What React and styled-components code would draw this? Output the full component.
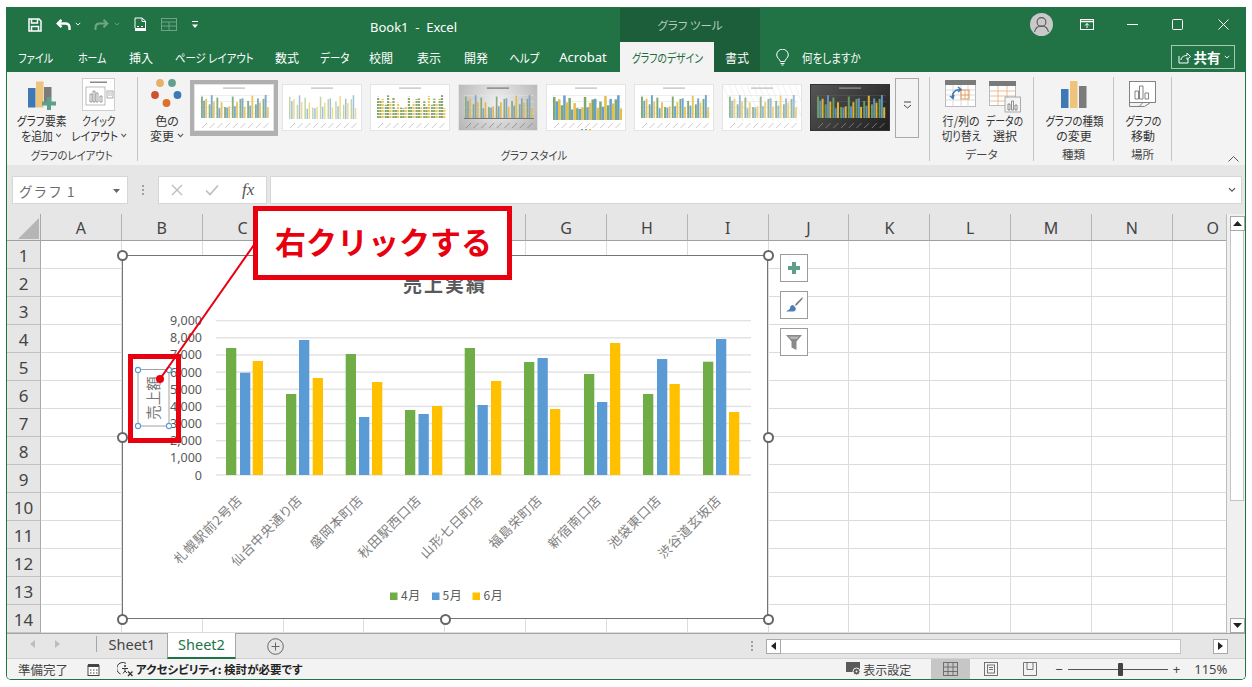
import React from "react";
import styled, { createGlobalStyle } from "styled-components";

const JP = `"Noto Sans CJK JP", "Noto Sans", sans-serif`;
const GREEN = "#217346";
const DARK = "#1c5e3a";

const Global = createGlobalStyle`
  html, body { margin: 0; padding: 0; background: #fff; overflow: hidden; }
  * { box-sizing: border-box; }
`;

const Win = styled.div`
  margin: 7px 0 0 6px; width: 1240px; height: 673px; display: flex; flex-direction: column;
  border: 1px solid ${GREEN}; border-top: 0; border-radius: 0 0 5px 5px; overflow: hidden;
  font-family: ${JP}; font-feature-settings: "palt"; color: #333; background: #fff;
`;
const TitleBar = styled.div`
  height: 35px; background: ${GREEN}; display: flex; align-items: center; color: #fff; flex: none;
`;
const Qat = styled.span`
  display: inline-flex; flex: none; margin-left: ${p => p.$ml}px; opacity: ${p => p.$dim ? 0.35 : 1};
`;
const DocTitle = styled.div`
  position: absolute; left: 370px; top: 18px; font: 13px "Noto Sans", sans-serif; color: #fff; white-space: pre;
`;
const Context = styled.div`
  margin-left: auto; width: 140px; height: 34px; align-self: flex-end; background: ${DARK}; color: #b4cdbf;
  display: flex; align-items: center; justify-content: center; font-size: 11.5px; padding-bottom: 1px;
`;
const TitleRight = styled.div`
  width: 485px; display: flex; align-items: center; flex: none; height: 100%;
`;
const WinIcon = styled.span`
  display: inline-flex; flex: none; margin-left: ${p => p.$ml}px;
`;
const TabBar = styled.div`
  height: 30px; background: ${GREEN}; display: flex; flex: none; align-items: stretch;
`;
const Tab = styled.div`
  width: ${p => p.$w}px; flex: none; display: flex; align-items: center; justify-content: center;
  font-size: 12px; color: ${p => p.$active ? "#1f6b41" : "#fff"};
  background: ${p => p.$active ? "#f3f3f3" : p.$ctx ? DARK : "transparent"};
  margin-left: ${p => p.$ml || 0}px; white-space: nowrap;
`;
const LatinTab = styled(Tab)`
  font-family: "Noto Sans", sans-serif; font-size: 13px;
`;
const Squeeze = styled.span`
  display: inline-flex; align-items: center; gap: 3px; white-space: nowrap; transform: scaleX(${p => p.$x || 1});
  transform-origin: ${p => p.$left ? "left center" : "center"};
`;
const TellMe = styled.div`
  margin-left: 16px; display: flex; align-items: center; gap: 13px; color: #fff; font-size: 12px; flex: none; width: 100px;
`;
const ShareBtn = styled.div`
  margin: 3px 10px 3px auto; width: 64px; border: 1px solid #a6c9b5; color: #fff; display: flex; align-items: center;
  justify-content: center; gap: 3px; font-size: 13.5px; font-weight: 700;
`;
const Ribbon = styled.div`
  height: 93px; background: #f3f3f3; display: flex; flex: none; position: relative;
`;
const Group = styled.div`
  width: ${p => p.$w}px; flex: none; display: flex; flex-direction: column; position: relative;
  &::after { content: ""; position: absolute; right: 0; top: 5px; bottom: 4px; width: 1px; background: #c6c6c6; }
`;
const GroupBody = styled.div`
  flex: 1; display: flex; align-items: flex-start; padding: 6px 0 0 ${p => p.$pl || 0}px; justify-content: ${p => p.$center ? "center" : "flex-start"};
`;
const GroupLabel = styled.div`
  height: 20px; font-size: 11.5px; line-height: 19px; display: flex; justify-content: center; color: #444; padding-right: 1px;
`;
const RibbonBtn = styled.div`
  width: ${p => p.$w}px; flex: none; display: flex; flex-direction: column; align-items: center;
  font-size: 12px; line-height: 15px; color: #333;
`;
const IconBox = styled.div`
  height: 35px; display: flex; align-items: flex-start; justify-content: center; padding-top: ${p => p.$pt || 0}px;
`;
const Gallery = styled.div`
  display: flex; margin-top: 2px; flex: none;
`;
const Thumb = styled.div`
  width: 88px; height: 56px; padding: 4px 4px 5px; flex: none; background: ${p => p.$sel ? "#b0b0b0" : "transparent"};
`;
const ThumbInner = styled.div`
  width: 80px; height: 47px; background: ${p => p.$bg}; border: 1px solid ${p => p.$dark ? "#333" : "#e4e4e4"};
  svg { display: block; }
`;
const MoreBtn = styled.div`
  width: 24px; height: 60px; margin: 0 0 0 1px; border: 1px solid #a9a9a9; display: flex; align-items: center; justify-content: center; flex: none; padding-bottom: 6px;
`;
const Collapse = styled.span`
  position: absolute; right: 6px; bottom: 3px; display: inline-flex;
`;
const FormulaZone = styled.div`
  height: 49px; background: #e6e6e6; padding: 11px 3px 10px 5px; display: flex; flex: none; align-items: stretch;
`;
const NameBox = styled.div`
  width: 116px; background: #fff; border: 1px solid #d6d6d6; display: flex; align-items: center; justify-content: space-between;
  padding: 1px 7px 0 6px; font-size: 13.5px; color: #6d6d6d; font-feature-settings: normal; letter-spacing: 1.1px;
`;
const Dots = styled.div`
  width: 30px; display: flex; flex-direction: column; gap: 2px; align-items: center; justify-content: center; flex: none;
`;
const Dot = styled.i`
  width: 2px; height: 2px; background: #a0a0a0; display: block;
`;
const FxBox = styled.div`
  width: 109px; background: #fff; border: 1px solid #d6d6d6; display: flex; align-items: center; padding-left: 12px; flex: none; margin-right: 3px;
  gap: 22px;
`;
const Fx = styled.span`
  font: italic 17px "Liberation Serif", serif; color: #555; margin-left: 1px;
`;
const FormulaInput = styled.div`
  flex: 1; background: #fff; border: 1px solid #d6d6d6; display: flex; align-items: center; justify-content: flex-end; padding-right: 5px;
`;
const Sheet = styled.div`
  height: 419px; position: relative; display: flex; flex: none; background: #e6e6e6;
`;
const GridArea = styled.div`
  width: 1220px; height: 419px; overflow: hidden; display: grid; flex: none;
  grid-template-columns: 34px repeat(15, 80.85px); grid-template-rows: 27px repeat(14, 28px);
  border-right: 1px solid #bdbdbd; background: #fff;
`;
const Corner = styled.div`
  background: #e6e6e6; border-right: 1px solid #a8a8a8; border-bottom: 1px solid #a0a0a0; position: relative;
  &::after { content: ""; position: absolute; right: 1px; bottom: 1px; width: 0; height: 0;
    border-left: 21px solid transparent; border-bottom: 21px solid #b5b5b5; }
`;
const ColHead = styled.div`
  background: #e6e6e6; border-right: 1px solid #b4b4b4; border-bottom: 1px solid #a0a0a0; display: flex; align-items: center; justify-content: center;
  font: 16px "Noto Sans", sans-serif; color: #444; padding-top: 1px;
`;
const RowHead = styled.div`
  background: #e6e6e6; border-right: 1px solid #a8a8a8; border-bottom: 1px solid #c2c2c2; display: flex; align-items: center; justify-content: center;
  font: 17px "Noto Sans", sans-serif; color: #444; padding-top: 1px;
`;
const Cell = styled.div`
  border-right: 1px solid #dcdcdc; border-bottom: 1px solid #dcdcdc; background: #fff;
`;
const VScroll = styled.div`
  width: 18px; flex: none; background: #f0f0f0; padding: 2px 1px 0 3px; display: flex; flex-direction: column;
`;
const ScrollBtn = styled.div`
  width: 15px; height: 15px; flex: none; background: #fff; border: 1px solid #a9a9a9; display: flex; align-items: center; justify-content: center;
  margin-top: ${p => p.$mt || 0}px;
`;
const VThumb = styled.div`
  height: 270px; flex: none; background: #fff; border: 1px solid #c4c4c4; border-top: 0;
`;
const ChartFrame = styled.div`
  position: absolute; left: 115px; top: 41px; width: 646px; height: 364px; background: #fff; border: 1px solid #747474;
  svg { position: absolute; left: -1px; top: -1px; display: block; }
`;
const Handle = styled.span`
  position: absolute; left: ${p => p.$x}px; top: ${p => p.$y}px; width: 11px; height: 11px; margin: -5.5px 0 0 -5.5px;
  border: 2px solid #666; border-radius: 50%; background: #fff;
`;
const SideTools = styled.div`
  position: absolute; left: 773px; top: 40px; display: flex; flex-direction: column; gap: 9px;
`;
const SideBtn = styled.div`
  width: 28px; height: 28px; background: #fff; border: 1px solid #9c9c9c; display: flex; align-items: center; justify-content: center;
`;
const RedBox = styled.div`
  position: absolute; left: 121px; top: 140px; width: 53px; height: 89px; border: 5px solid #e8000e;
`;
const Overlay = styled.svg`
  position: absolute; left: 0; top: 0; width: 1220px; height: 419px; pointer-events: none; overflow: visible;
`;
const Callout = styled.div`
  position: absolute; left: 246px; top: -8px; width: 259px; height: 74px; background: #fff; border: 5px solid #e8000e;
  display: flex; align-items: center; justify-content: center; color: #e8000e; font-size: 31px; font-weight: 700;
  font-feature-settings: normal; line-height: 1; padding: 0 0 6px 2px; white-space: nowrap;
`;
const SheetBar = styled.div`
  height: 26px; flex: none; background: #e6e6e6; border-top: 1px solid #a6a6a6; border-bottom: 1px solid #d2d2d2; display: flex; align-items: stretch;
`;
const NavArrows = styled.div`
  width: 90px; flex: none; display: flex; align-items: center; padding-left: 23px; gap: 20px; border-right: 1px solid #a6a6a6; margin: 2px 0 6px;
`;
const SheetTab = styled.div`
  width: ${p => p.$w}px; flex: none; display: flex; align-items: center; justify-content: center; font: 14.5px "Noto Sans", sans-serif;
  margin-top: -1px; padding-bottom: 2px;
  color: ${p => p.$active ? "#217346" : "#444"};
  background: ${p => p.$active ? "#fff" : "transparent"};
  border-bottom: 2px solid ${p => p.$active ? "#217346" : "transparent"};
  border-left: ${p => p.$active ? "1px solid #a6a6a6" : "0"};
  border-right: ${p => p.$active ? "1px solid #a6a6a6" : "0"};
  margin-bottom: -1px;
`;
const AddSheet = styled.div`
  margin-left: 31px; display: flex; align-items: center; flex: none;
`;
const BarDots = styled.div`
  margin-left: 461px; width: 14px; display: flex; flex-direction: column; gap: 2px; align-items: center; justify-content: center; flex: none;
`;
const HScroll = styled.div`
  display: flex; align-items: center; flex: none; margin-left: 7px;
`;
const HThumb = styled.div`
  width: 400px; height: 15px; background: #fff; border: 1px solid #c4c4c4; border-left: 0; flex: none;
`;
const HGap = styled.div`
  width: 32px; flex: none;
`;
const StatusBar = styled.div`
  flex: 1; background: #f3f3f3; display: flex; align-items: center; font-size: 12.5px; color: #444; padding-left: 11px;
`;
const StatusText = styled.span`
  flex: none; font-size: ${p => p.$s || 12}px; font-weight: ${p => p.$b ? 700 : 400}; margin-left: ${p => p.$ml || 0}px; white-space: nowrap; color: ${p => p.$b ? "#222" : "#444"};
`;
const ViewBtn = styled.div`
  width: 39px; height: 100%; flex: none; display: flex; align-items: center; justify-content: center; background: ${p => p.$active ? "#c6c6c6" : "transparent"}; margin-left: ${p => p.$ml || 0}px;
`;
const Zoom = styled.span`
  font: 13px "Noto Sans", sans-serif; color: #444; margin-left: ${p => p.$ml}px; flex: none;
`;
const ZoomTrack = styled.div`
  width: 100px; height: 1px; background: #555; margin-left: 5px; position: relative; flex: none;
  &::after { content: ""; position: absolute; left: 50px; top: -6px; width: 5px; height: 13px; background: #444; border-radius: 1px; }
`;

/* ---- data ---- */
const TOPS = [[348,372.7,361],[394,340,378],[354,417,382],[410,414,406],[348,405,381],[362,358,409],[374,402,343],[394,359,384],[361.7,339,412]];
const XS = [[226,240,252.7],[286,299,312.7],[345.7,359,372],[405,418.5,432],[464.7,477.5,491],[524,537.5,550],[584,597,610],[643,657,669.5],[703,716,729]];
const COLORS = ["#70ad47", "#5b9bd5", "#ffc000"];
const STORES = ["札幌駅前2号店","仙台中央通り店","盛岡本町店","秋田駅西口店","山形七日町店","福島栄町店","新宿南口店","池袋東口店","渋谷道玄坂店"];
const ENDS = [243,303,364,422,484,543,602,662,722];
const COLS = "ABCDEFGHIJKLMNO".split("");
const HIDDEN_BY_CALLOUT = "DEF";

/* ---- icons ---- */
const Chev = ({ c = "#555", s = 7 }) => (
  <svg width={s} height={s * 0.7} viewBox="0 0 7 5" fill="none" stroke={c} strokeWidth="1.1"><path d="M.8 1l2.7 2.7L6.2 1" /></svg>
);
const SaveI = () => (
  <svg width="14" height="14" viewBox="0 0 14 14" fill="none" stroke="#fff" strokeWidth="1.5"><path d="M1 1h10l2 2v10H1z" /><path d="M3.5 1v4h6V1M3.5 13V8.5h7V13" /></svg>
);
const UndoI = () => (
  <svg width="15" height="12" viewBox="0 0 15 12" fill="none" stroke="#fff" strokeWidth="2.4"><path d="M1.5 4.5h8a4 4 0 0 1 4 3.5v3" /><path d="M5.5 .8L1.8 4.5l3.7 3.7" /></svg>
);
const RedoI = () => (
  <svg width="15" height="12" viewBox="0 0 15 12" fill="none" stroke="#fff" strokeWidth="2.1"><path d="M13.5 4.5h-8a4 4 0 0 0-4 3.5v3" /><path d="M9.5 .8l3.7 3.7-3.7 3.7" /></svg>
);
const DocI = () => (
  <svg width="13" height="15" viewBox="0 0 13 15" fill="none" stroke="#fff" strokeWidth="1"><path d="M1 11V1h7l3.5 3v7M8 1v3.5h3.5" /><rect x="1" y="11" width="11" height="3" fill="#fff" stroke="none" /><path d="M3 9.5h2M7 9.5h2" /></svg>
);
const FormI = () => (
  <svg width="16" height="13" viewBox="0 0 16 13" fill="none" stroke="#fff" strokeWidth="1"><rect x=".5" y=".5" width="15" height="12" /><path d="M1 4h14M1 8h14M8 4v8" /></svg>
);
const DropI = () => (
  <svg width="6" height="8" viewBox="0 0 6 8" fill="#fff"><rect y="0" width="6" height="1" /><path d="M0 3.5h6L3 7z" /></svg>
);
const Avatar = () => (
  <svg width="23" height="23" viewBox="0 0 23 23"><circle cx="11.5" cy="11.5" r="11.5" fill="#c9c9c9" /><circle cx="11.5" cy="9" r="4.4" fill="none" stroke="#5a5a5a" strokeWidth="1.1" /><path d="M4.5 19c.8-4 3.6-6 7-6s6.200 2 7 6" fill="none" stroke="#5a5a5a" strokeWidth="1.1" /></svg>
);
const RibbonDisp = () => (
  <svg width="14" height="11" viewBox="0 0 14 11" fill="none" stroke="#fff" strokeWidth="1"><rect x=".5" y=".5" width="13" height="10" /><path d="M1 2.5h12" strokeWidth="1.400" /><path d="M7 9V4.500M5 6.500l2-2 2 2" /></svg>
);
const MinI = () => <svg width="11" height="2" viewBox="0 0 11 2"><rect width="11" height="1" fill="#fff" /></svg>;
const MaxI = () => <svg width="11" height="11" viewBox="0 0 11 11"><rect x=".5" y=".5" width="10" height="10" rx="1" fill="none" stroke="#fff" /></svg>;
const CloseI = () => <svg width="11" height="11" viewBox="0 0 11 11" stroke="#fff" strokeWidth="1"><path d="M.5 .5l10 10M10.500 .5l-10 10" /></svg>;
const BulbI = () => (
  <svg width="13" height="17" viewBox="0 0 13 17" fill="none" stroke="#fff" strokeWidth="1"><path d="M4.300 12.500c0-2-3.600-3.500-3.600-6.500a5.800 5.800 0 0 1 11.600 0c0 3-3.600 4.500-3.600 6.500z" /><path d="M4.500 14.500h4M5.500 16h2" /></svg>
);
const ShareI = () => (
  <svg width="14" height="13" viewBox="0 0 14 13" fill="none" stroke="#fff" strokeWidth="1"><path d="M2 5v7h9V8" /><path d="M4 9c0-3 3-4.500 6-4.500V2l3.500 3.500L10 8.500V6.500" /></svg>
);
const AddElemI = () => (
  <svg width="36" height="34" viewBox="26 78 36 34">
    <rect x="30" y="88" width="7.500" height="19.500" fill="#3f78b5" /><rect x="38" y="81.500" width="7.500" height="26" fill="#edc47c" /><rect x="46" y="87" width="7.500" height="16" fill="#7b7b7b" />
    <path d="M49 97h4v4.500h5v4h-5v4.500h-4v-4.500h-5v-4h5z" fill="#5e9e8a" />
  </svg>
);
const QuickI = () => (
  <svg width="34" height="34" viewBox="0 0 34 34">
    <rect x=".5" y=".5" width="32" height="32" fill="#fff" stroke="#cfcfcf" /><rect x="8" y="3.500" width="17" height="1.500" fill="#8a8a8a" />
    <rect x="4" y="9" width="19" height="18" fill="none" stroke="#aaa" strokeWidth=".8" />
    <path d="M8 24v-8h2v8zM11 24V13h2v11zM14 24v-9h2v9zM18 24v-6h2v6z" fill="none" stroke="#777" strokeWidth=".7" />
    <rect x="25" y="13" width="6" height="7" fill="none" stroke="#888" strokeWidth=".7" /><path d="M26 15h4M26 17h4" stroke="#888" strokeWidth=".6" />
  </svg>
);
const ColorsI = () => (
  <svg width="32" height="32" viewBox="151 79 32 32">
    <circle cx="160" cy="84" r="3.900" fill="#e7b069" /><circle cx="172" cy="84" r="3.900" fill="#61a08f" /><circle cx="155" cy="96" r="3.900" fill="#cf5230" /><circle cx="177.500" cy="96" r="3.900" fill="#3f78b5" /><circle cx="166.500" cy="104" r="3.900" fill="#de7029" />
  </svg>
);
const SwitchI = () => (
  <svg width="32" height="28" viewBox="0 0 32 28">
    <rect x=".5" y=".5" width="30" height="26" fill="#fff" stroke="#bbb" /><rect width="31" height="5" fill="#7a7a7a" />
    <path d="M1 10h30M1 15h30M1 20h30M8 5v22M16 5v22M23 5v22" stroke="#ccc" strokeWidth=".7" />
    <path d="M16 10h8v9h-8z" fill="none" stroke="#e59a5e" strokeWidth="1.100" /><path d="M16 15h8M20 10v9" stroke="#e59a5e" strokeWidth=".8" />
    <path d="M15 10a6 6 0 0 0-7 8M9 15l-1 3.500-3-2.500M13 7l3 2.500-3 2.500" fill="none" stroke="#3f78b5" strokeWidth="1.500" />
  </svg>
);
const SelectDataI = () => (
  <svg width="32" height="32" viewBox="0 0 32 32">
    <rect x=".5" y=".5" width="26" height="24" fill="#fff" stroke="#bbb" /><rect width="27" height="5" fill="#7a7a7a" />
    <path d="M1 10h26M1 15h26M1 20h26M9 5v20M18 5v20" stroke="#e9b48a" strokeWidth=".9" />
    <rect x="16" y="16" width="15.500" height="15" fill="#f4f4f4" stroke="#999" strokeWidth=".8" />
    <path d="M19 29v-6h2v6zM22.500 29v-9h2v9zM26 29v-5h2v5z" fill="none" stroke="#666" strokeWidth=".7" />
  </svg>
);
const TypeI = () => (
  <svg width="26" height="28" viewBox="0 0 26 28"><rect y="9" width="7.500" height="19" fill="#3f78b5" /><rect x="9" y="1" width="7.500" height="27" fill="#edc47c" /><rect x="18" y="6" width="7.500" height="22" fill="#7b7b7b" /></svg>
);
const MoveI = () => (
  <svg width="28" height="28" viewBox="0 0 28 28" fill="none" stroke="#777" strokeWidth=".9">
    <rect x=".5" y=".5" width="26" height="21" fill="#fff" />
    <path d="M6 18v-8h3.500v8zM10.500 18V5h3.500v13zM16 18v-6h3.500v6z" /><path d="M.5 21.500l0 4h15l6-4M10 25.500l4-4" />
  </svg>
);
const MoreI = () => (
  <svg width="9" height="9" viewBox="0 0 9 9" fill="none" stroke="#444" strokeWidth="1"><path d="M1 1h7" /><path d="M1 4l3.500 3L8 4" /></svg>
);
const PlusI = () => <svg width="14" height="14" viewBox="0 0 14 14"><path d="M5 1h4v4h4v4H9v4H5V9H1V5h4z" fill="#5e9e8a" /></svg>;
const BrushI = () => (
  <svg width="17" height="16" viewBox="0 0 17 16"><path d="M16.500 0L10 6.500 8.500 9l2.500-1 5.500-6z" fill="#777" /><path d="M7 8C5 8 4 9.500 4 11c0 1.500-2 2-4 3.500h6.500c2.500 0 4-1.500 3-4z" fill="#4d7fb5" /></svg>
);
const FunnelI = () => <svg width="16" height="15" viewBox="0 0 16 15"><path d="M0 0h16l-5.500 6.500V15l-5-2.500v-6z" fill="#8a8a8a" /><path d="M3 1.500h10L11 4H5z" fill="#b5b5b5" /></svg>;
const MacroI = () => (
  <svg width="13" height="13" viewBox="0 0 13 13" fill="none" stroke="#444"><rect x="1" y="2.500" width="11" height="10" fill="#fff" /><rect x="1" y="1" width="11" height="3" fill="#444" stroke="none" /><path d="M3 7h1.500M6 7h1.500M9 7h1.500M3 10h1.500M6 10h1.500M9 10h1.500" /></svg>
);
const AccessI = () => (
  <svg width="17" height="15" viewBox="0 0 17 15" fill="none" stroke="#333" strokeWidth="1">
    <path d="M9 1.400A6 6 0 1 0 3.500 12" />
    <circle cx="8" cy="4" r="1" fill="#333" stroke="none" />
    <path d="M5 6.500h6M8 6.500v2.500L6 11.500M8 9l2 2" />
    <path d="M11 9.500l4.500 4.500M15.500 9.500L11 14" strokeWidth="1.300" />
  </svg>
);
const DisplayI = () => (
  <svg width="15" height="14" viewBox="0 0 15 14"><rect width="14" height="10" fill="#5a5a5a" /><circle cx="10.500" cy="9.500" r="3.500" fill="#5a5a5a" stroke="#f3f3f3" /><circle cx="10.500" cy="9.500" r="1" fill="#f3f3f3" /></svg>
);
const GridViewI = () => <svg width="15" height="14" viewBox="0 0 15 14" fill="none" stroke="#666" strokeWidth=".9"><rect x=".5" y=".5" width="14" height="13" /><path d="M5 1v12M10 1v12M1 5h13M1 9.500h13" /></svg>;
const PageViewI = () => <svg width="14" height="14" viewBox="0 0 14 14" fill="none" stroke="#666" strokeWidth=".9"><rect x=".5" y=".5" width="13" height="13" /><rect x="3.500" y="3" width="7" height="8" /><path d="M5 5.500h4M5 7.500h4" /></svg>;
const BreakViewI = () => <svg width="14" height="14" viewBox="0 0 14 14" fill="none" stroke="#666" strokeWidth=".9"><path d="M.5 13.500h13V.5H.5zM4 .5v7h6V.5" /></svg>;
const TriL = ({ c = "#222" }) => <svg width="5" height="8" viewBox="0 0 5 8"><path d="M5 0v8L0 4z" fill={c} /></svg>;
const TriR = ({ c = "#222" }) => <svg width="5" height="8" viewBox="0 0 5 8"><path d="M0 0v8l5-4z" fill={c} /></svg>;
const TriU = () => <svg width="9" height="5" viewBox="0 0 9 5"><path d="M0 5h9L4.500 0z" fill="#222" /></svg>;
const TriD = () => <svg width="9" height="5" viewBox="0 0 9 5"><path d="M0 0h9L4.500 5z" fill="#222" /></svg>;
const AddCircle = () => <svg width="17" height="17" viewBox="0 0 17 17" fill="none" stroke="#666"><circle cx="8.500" cy="8.500" r="7.800" /><path d="M8.500 4.500v8M4.500 8.500h8" /></svg>;

/* ---- gallery ---- */
const MiniChart = ({ v }) => {
  const base = v.base || 35;
  return (
    <svg width="78" height="45" viewBox="0 0 78 45">
      {v.hatch && Array.from({ length: 16 }, (_, i) => <path key={i} d={`M${i * 6} 0l14 36`} stroke="#e2e2e2" strokeWidth=".5" />)}
      <rect x="28" y="2.500" width="22" height="1.200" fill={v.title || "#bbb"} />
      {!v.noGrid && [10, 16, 22, 28].map(y => <rect key={y} x="5" y={y} width="70" height=".4" fill={v.grid || "#cdd9e5"} />)}
      {TOPS.map((g, i) => g.map((t, j) => {
        const bh = (475 - t) / 154 * (base - 7);
        return <rect key={`${i}${j}`} x={6 + i * 7.700 + j * v.step} y={base - bh} width={v.w} height={bh} fill={(v.colors || ["#8aaf80", "#7fa9cf", "#e9c766"])[j]} />;
      }))}
      {v.stripe && [12, 15, 18, 21, 24, 27, 30, 33].map(y => <rect key={y} x="4" y={y} width="72" height="1" fill="#fff" />)}
      {v.base2 && <rect x="5" y={base} width="70" height="1" fill="#777" />}
      {TOPS.map((_, i) => <path key={i} d={`M${7 + i * 7.700} 43l5-5`} stroke={v.lab || "#bdbdbd"} strokeWidth=".8" />)}
      {v.legend && <g><rect x="34" y="44" width="2" height="1" fill="#70ad47" /><rect x="38" y="44" width="2" height="1" fill="#5b9bd5" /><rect x="42" y="44" width="2" height="1" fill="#ffc000" /></g>}
    </svg>
  );
};
const THUMBS = [
  { bg: "#fff", w: 1.900, step: 2.100, sel: true, base: 33 },
  { bg: "#fff", w: 1.500, step: 2.100, noGrid: true, colors: ["#c2d4a6", "#9fc0dd", "#f0d98b"], base: 34 },
  { bg: "#fff", w: 2.200, step: 2.300, stripe: true, noGrid: true, colors: ["#89a869", "#89a869", "#ecc95f"], base: 34 },
  { bg: "radial-gradient(circle at 50% 40%, #f1f1f1, #b4b4b4)", w: 1.700, step: 2.100, base: 33, base2: true, grid: "#e8e8e8", title: "#777", lab: "#888", colors: ["#8aa980", "#80a4c4", "#e4b94e"] },
  { bg: "#fff", w: 2.500, step: 2.500, base: 35, legend: true, colors: ["#7fa86a", "#689fd0", "#e6be4a"] },
  { bg: "#fff", w: 1.900, step: 2.300, base: 33, colors: ["#7fa96e", "#6ea5d6", "#e9c45a"] },
  { bg: "#fff", w: 1.900, step: 2.200, hatch: true, base: 33, colors: ["#9ab891", "#9bbcd9", "#eed27d"] },
  { bg: "linear-gradient(135deg,#565656,#1f1f1f)", w: 2.000, step: 2.300, base: 33, dark: true, grid: "#666", title: "#999", lab: "#888", colors: ["#6d9b63", "#5d94c6", "#e1b32e"] },
];

const NUMS = ["0","1,000","2,000","3,000","4,000","5,000","6,000","7,000","8,000","9,000"];

const ChartSvg = () => (
  <svg width="646" height="364" viewBox="122 255 646 364" fontFamily={JP} fill="#595959">
    {NUMS.map((n, i) => {
      const y = 475 - i * 17.150;
      return (
        <g key={n}>
          <rect x="216" y={y - 0.7} width="535" height="1.400" fill="#e2e2e2" />
          <text x="202" y={y + 4.500} textAnchor="end" fontSize="12.500" fontFamily="Noto Sans, sans-serif">{n}</text>
        </g>
      );
    })}
    {TOPS.map((g, i) => g.map((t, j) => (
      <rect key={`${i}-${j}`} x={XS[i][j]} y={t} width="10.300" height={475 - t} fill={COLORS[j]} />
    )))}
    <text x="445" y="291.500" textAnchor="middle" fontSize="19" fontWeight="700" letterSpacing="2">売上実績</text>
    <g fill="#7f7f7f" fontSize="13" letterSpacing=".7">
      {STORES.map((s, i) => (
        <text key={s} x={ENDS[i]} y="501" textAnchor="end" transform={`rotate(-45 ${ENDS[i]} 501)`}>{s}</text>
      ))}
    </g>
    <g fontSize="12" letterSpacing=".5">
      <rect x="390" y="592.500" width="7.500" height="7.500" fill={COLORS[0]} /><text x="401" y="600">4月</text>
      <rect x="432" y="592.500" width="7.500" height="7.500" fill={COLORS[1]} /><text x="442.500" y="600">5月</text>
      <rect x="472.500" y="592.500" width="7.500" height="7.500" fill={COLORS[2]} /><text x="483.500" y="600">6月</text>
    </g>
    <rect x="138" y="369.500" width="31" height="56.500" fill="none" stroke="#a3a3a3" strokeWidth="1" />
    <text x="153.500" y="398" textAnchor="middle" fontSize="14.500" fill="#7a7a7a" transform="rotate(-90 153.500 398) translate(0 5)">売上額</text>
    {[[138,370],[169,370],[138,426],[169,426]].map(([x, y]) => (
      <circle key={`${x}${y}`} cx={x} cy={y} r="2.600" fill="#fff" stroke="#5b9bd5" strokeWidth="1.100" />
    ))}
  </svg>
);

export default function App() {
  return (
    <>
      <Global />
      <Win>
        <TitleBar>
          <Qat $ml={21}><SaveI /></Qat>
          <Qat $ml={14}><UndoI /></Qat>
          <Qat $ml={4}><Chev c="#fff" s={6} /></Qat>
          <Qat $ml={13} $dim><RedoI /></Qat>
          <Qat $ml={5} $dim><Chev c="#fff" s={6} /></Qat>
          <Qat $ml={14}><DocI /></Qat>
          <Qat $ml={14} $dim><FormI /></Qat>
          <Qat $ml={15}><DropI /></Qat>
          <DocTitle>Book1  -  Excel</DocTitle>
          <Context>グラフ ツール</Context>
          <TitleRight>
            <WinIcon $ml={270}><Avatar /></WinIcon>
            <WinIcon $ml={27}><RibbonDisp /></WinIcon>
            <WinIcon $ml={33}><MinI /></WinIcon>
            <WinIcon $ml={34}><MaxI /></WinIcon>
            <WinIcon $ml={35}><CloseI /></WinIcon>
          </TitleRight>
        </TitleBar>
        <TabBar>
          <Tab $w={58}><Squeeze $x={0.84}>ファイル</Squeeze></Tab>
          <Tab $w={54}><Squeeze $x={0.82}>ホーム</Squeeze></Tab>
          <Tab $w={44}>挿入</Tab>
          <Tab $w={102}><Squeeze $x={0.87}>ページ レイアウト</Squeeze></Tab>
          <Tab $w={44}>数式</Tab>
          <Tab $w={52}><Squeeze $x={0.87}>データ</Squeeze></Tab>
          <Tab $w={40}>校閲</Tab>
          <Tab $w={56}>表示</Tab>
          <Tab $w={38}>開発</Tab>
          <Tab $w={58}><Squeeze $x={0.88}>ヘルプ</Squeeze></Tab>
          <LatinTab $w={60}>Acrobat</LatinTab>
          <Tab $w={94} $ml={7} $active><Squeeze $x={0.82}>グラフのデザイン</Squeeze></Tab>
          <Tab $w={46} $ctx>書式</Tab>
          <TellMe><BulbI /><Squeeze $x={0.88} $left>何をしますか</Squeeze></TellMe>
          <ShareBtn><ShareI />共有<Chev c="#fff" s={6} /></ShareBtn>
        </TabBar>
        <Ribbon>
          <Group $w={131}>
            <GroupBody $pl={4}>
              <RibbonBtn $w={62}>
                <IconBox><AddElemI /></IconBox>
                <Squeeze $x={0.9}>グラフ要素</Squeeze>
                <Squeeze $x={0.9}>を追加 <Chev /></Squeeze>
              </RibbonBtn>
              <RibbonBtn $w={52}>
                <IconBox><QuickI /></IconBox>
                <Squeeze $x={0.8}>クイック</Squeeze>
                <Squeeze $x={0.9}>レイアウト <Chev /></Squeeze>
              </RibbonBtn>
            </GroupBody>
            <GroupLabel><Squeeze $x={0.9}>グラフのレイアウト</Squeeze></GroupLabel>
          </Group>
          <Group $w={792}>
            <GroupBody $pl={6}>
              <RibbonBtn $w={46}>
                <IconBox><ColorsI /></IconBox>
                <Squeeze>色の</Squeeze>
                <Squeeze>変更 <Chev /></Squeeze>
              </RibbonBtn>
              <Gallery>
                {THUMBS.map((t, i) => (
                  <Thumb key={i} $sel={t.sel}>
                    <ThumbInner $bg={t.bg} $dark={t.dark}><MiniChart v={t} /></ThumbInner>
                  </Thumb>
                ))}
              </Gallery>
              <MoreBtn><MoreI /></MoreBtn>
            </GroupBody>
            <GroupLabel><Squeeze $x={0.9}>グラフ スタイル</Squeeze></GroupLabel>
          </Group>
          <Group $w={104}>
            <GroupBody $pl={9}>
              <RibbonBtn $w={44}>
                <IconBox $pt={2}><SwitchI /></IconBox>
                <Squeeze $x={0.92}>行/列の</Squeeze>
                <Squeeze $x={0.88}>切り替え</Squeeze>
              </RibbonBtn>
              <RibbonBtn $w={44}>
                <IconBox $pt={3}><SelectDataI /></IconBox>
                <Squeeze $x={0.82}>データの</Squeeze>
                <Squeeze>選択</Squeeze>
              </RibbonBtn>
            </GroupBody>
            <GroupLabel>データ</GroupLabel>
          </Group>
          <Group $w={80}>
            <GroupBody $center>
              <RibbonBtn $w={70}>
                <IconBox $pt={2}><TypeI /></IconBox>
                <Squeeze $x={0.87}>グラフの種類</Squeeze>
                <Squeeze>の変更</Squeeze>
              </RibbonBtn>
            </GroupBody>
            <GroupLabel>種類</GroupLabel>
          </Group>
          <Group $w={58}>
            <GroupBody $center>
              <RibbonBtn $w={50}>
                <IconBox $pt={3}><MoveI /></IconBox>
                <Squeeze $x={0.84}>グラフの</Squeeze>
                <Squeeze>移動</Squeeze>
              </RibbonBtn>
            </GroupBody>
            <GroupLabel>場所</GroupLabel>
          </Group>
          <Collapse><svg width="11" height="6" viewBox="0 0 11 6" fill="none" stroke="#555"><path d="M.5 5.500l5-5 5 5" /></svg></Collapse>
        </Ribbon>
        <FormulaZone>
          <NameBox>グラフ 1<svg width="7" height="4" viewBox="0 0 7 4"><path d="M0 0h7L3.500 4z" fill="#666" /></svg></NameBox>
          <Dots><Dot /><Dot /><Dot /></Dots>
          <FxBox>
            <svg width="12" height="12" viewBox="0 0 12 12" stroke="#bdbdbd" strokeWidth="1.400"><path d="M1 1l10 10M11 1L1 11" /></svg>
            <svg width="14" height="12" viewBox="0 0 14 12" fill="none" stroke="#bdbdbd" strokeWidth="1.600"><path d="M1 6.500l4 4L13 1.500" /></svg>
            <Fx>fx</Fx>
          </FxBox>
          <FormulaInput><Chev c="#555" s={8} /></FormulaInput>
        </FormulaZone>
        <Sheet>
          <GridArea>
            <Corner />
            {COLS.map(c => <ColHead key={c}>{HIDDEN_BY_CALLOUT.includes(c) ? "" : c}</ColHead>)}
            {Array.from({ length: 14 }, (_, r) => (
              <React.Fragment key={r}>
                <RowHead>{r + 1}</RowHead>
                {COLS.map(c => <Cell key={c} />)}
              </React.Fragment>
            ))}
          </GridArea>
          <VScroll>
            <ScrollBtn><TriU /></ScrollBtn>
            <VThumb />
            <ScrollBtn $mt={117}><TriD /></ScrollBtn>
          </VScroll>
          <ChartFrame><ChartSvg /></ChartFrame>
          {[[115,41],[438,41],[761,41],[115,223],[761,223],[115,405],[438,405],[761,405]].map(([x, y]) => (
            <Handle key={`${x}-${y}`} $x={x} $y={y} />
          ))}
          <SideTools>
            <SideBtn><PlusI /></SideBtn>
            <SideBtn><BrushI /></SideBtn>
            <SideBtn><FunnelI /></SideBtn>
          </SideTools>
          <RedBox />
          <Overlay viewBox="7 214 1220 419">
            <path d="M256 242L160 379" stroke="#e8000e" strokeWidth="2" />
            <circle cx="160" cy="379" r="4" fill="#e8000e" />
          </Overlay>
          <Callout>右クリックする</Callout>
        </Sheet>
        <SheetBar>
          <NavArrows><TriL c="#bdbdbd" /><TriR c="#bdbdbd" /></NavArrows>
          <SheetTab $w={70}>Sheet1</SheetTab>
          <SheetTab $w={69} $active>Sheet2</SheetTab>
          <AddSheet><AddCircle /></AddSheet>
          <BarDots><Dot /><Dot /><Dot /></BarDots>
          <HScroll>
            <ScrollBtn><TriL /></ScrollBtn>
            <HThumb />
            <HGap />
            <ScrollBtn><TriR /></ScrollBtn>
          </HScroll>
        </SheetBar>
        <StatusBar>
          <StatusText $s={12.5}>準備完了</StatusText>
          <WinIcon $ml={19}><MacroI /></WinIcon>
          <WinIcon $ml={17}><AccessI /></WinIcon>
          <StatusText $b $s={11.5} $ml={2}>アクセシビリティ: 検討が必要です</StatusText>
          <WinIcon $ml={544}><DisplayI /></WinIcon>
          <StatusText $ml={2}>表示設定</StatusText>
          <ViewBtn $ml={20} $active><GridViewI /></ViewBtn>
          <ViewBtn $ml={1}><PageViewI /></ViewBtn>
          <ViewBtn><BreakViewI /></ViewBtn>
          <Zoom $ml={6}>−</Zoom>
          <ZoomTrack />
          <Zoom $ml={5}>+</Zoom>
          <Zoom $ml={14}>115%</Zoom>
        </StatusBar>
      </Win>
    </>
  );
}
